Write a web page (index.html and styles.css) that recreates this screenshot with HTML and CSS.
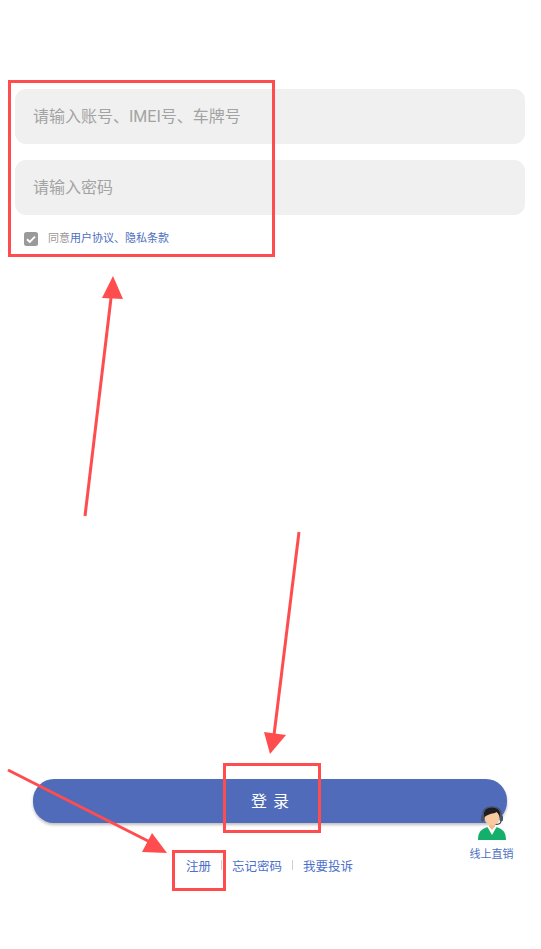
FILE: index.html
```html
<!DOCTYPE html>
<html lang="zh">
<head>
<meta charset="utf-8">
<title>登录</title>
<link rel="stylesheet" href="styles.css">
</head>
<body>
<main class="page">
  <form class="form">
    <div class="field">请输入账号、IMEI号、车牌号</div>
    <div class="field">请输入密码</div>
    <div class="agree">
      <svg class="check" viewBox="0 0 14 14" width="14" height="14">
        <rect width="14" height="14" rx="2.5" fill="#9a9a9a"/>
        <path d="M3 7.2l2.8 2.7L11 4.6" fill="none" stroke="#fff" stroke-width="1.9"/>
      </svg>
      <span class="agree-text">同意<span class="link">用户协议、隐私条款</span></span>
    </div>
  </form>
  <div class="spacer"></div>
  <div class="login">登 录</div>
  <div class="links">
    <span class="link-item">注册</span>
    <span class="sep"></span>
    <span class="link-item">忘记密码</span>
    <span class="sep"></span>
    <span class="link-item">我要投诉</span>
  </div>
  <div class="agent">
    <svg viewBox="0 0 32 36" width="32" height="36">
      <path d="M2 35c0-8 3-11 10-13l4 4 4-4c7 2 10 5 10 13z" fill="#14b06b"/>
      <path d="M11.500 22l4.500 8 4.500-8-2-1.500h-5z" fill="#fff"/>
      <path d="M13 18h6v3.500l-3 3.500-3-3.500z" fill="#f4b98c"/>
      <ellipse cx="16" cy="12.500" rx="7.500" ry="8" fill="#f9c9a0"/>
      <path d="M8 13C6.500 5 11 2 16 2s9.500 3 8 11c-.8-3-2-5-3.500-6C18 9 11 8.500 8 13z" fill="#1d1d22"/>
      <path d="M6.800 12V9c0-9.500 18.400-9.500 18.400 0v3" fill="none" stroke="#4a5468" stroke-width="1.300"/>
      <rect x="5" y="10" width="3.400" height="6.500" rx="1.700" fill="#4a5468"/>
      <rect x="23.600" y="10" width="3.400" height="6.500" rx="1.700" fill="#4a5468"/>
      <path d="M25 16c0 2-2 3.500-5.500 3.500" fill="none" stroke="#3a3a44" stroke-width="1.100"/>
    </svg>
    <span class="agent-label">线上直销</span>
  </div>
  <svg class="marks" viewBox="0 0 541 949" width="541" height="949">
    <g fill="none" stroke="#ff4d4f" stroke-width="3">
      <rect x="9.500" y="81.500" width="264" height="174"/>
      <rect x="224.500" y="764.500" width="95" height="67"/>
      <rect x="173.500" y="851.500" width="51" height="38"/>
      <path d="M85 516L111 298"/>
      <path d="M299 532L274 735"/>
      <path d="M8 770L152 843"/>
    </g>
    <g fill="#ff4d4f">
      <path d="M113 276L102 298L123 299Z"/>
      <path d="M270 754L264 732L286 735Z"/>
      <path d="M152 833L142 852L167 853Z"/>
    </g>
  </svg>
</main>
</body>
</html>
```
FILE: styles.css
```css
* { box-sizing: border-box; }
html, body { margin: 0; padding: 0; background: #fff; }
body { font-family: "Roboto", "Noto Sans CJK SC", sans-serif; }
.page {
  position: relative;
  width: 541px;
  height: 949px;
  overflow: hidden;
  display: flex;
  flex-direction: column;
  padding-top: 89px;
}
.form {
  display: flex;
  flex-direction: column;
  gap: 16px;
  padding: 0 16px 0 15px;
}
.field {
  height: 55px;
  padding: 0 0 3px 19px;
  display: flex;
  align-items: center;
  background: #f0f0f0;
  border-radius: 11px;
  color: #a3a3a3;
  font-size: 16px;
  text-indent: -1px;
}
.agree {
  display: flex;
  align-items: center;
  gap: 10px;
  margin-top: -1px;
  padding-left: 9px;
}
.check { flex: none; }
.agree-text { padding-top: 1px; font-size: 11px; line-height: 16px; color: #999; }
.link { color: #4c6fc0; }
.spacer { flex: 1; }
.login {
  margin: 0 34px 0 33px;
  height: 44px;
  padding: 0 0 3px 1px;
  border-radius: 21px;
  background: #4f6bb9;
  box-shadow: 0 2px 3px rgba(0, 0, 0, .25);
  color: #fff;
  font-size: 16px;
  letter-spacing: 1px;
  display: flex;
  align-items: center;
  justify-content: center;
}
.links {
  display: flex;
  justify-content: center;
  align-items: center;
  gap: 10px;
  height: 18px;
  margin: 33px 0 75px;
  padding-right: 2px;
  font-size: 12.500px;
  color: #4c70cc;
}
.sep { width: 1px; height: 10px; background: #cfcfcf; }
.agent {
  position: absolute;
  left: 468px;
  top: 805px;
  width: 47px;
  display: flex;
  flex-direction: column;
  align-items: center;
  gap: 7px;
}
.agent-label { font-size: 11px; line-height: 14px; color: #4c6fc0; white-space: nowrap; }
.marks { position: absolute; left: 0; top: 0; pointer-events: none; }
```
